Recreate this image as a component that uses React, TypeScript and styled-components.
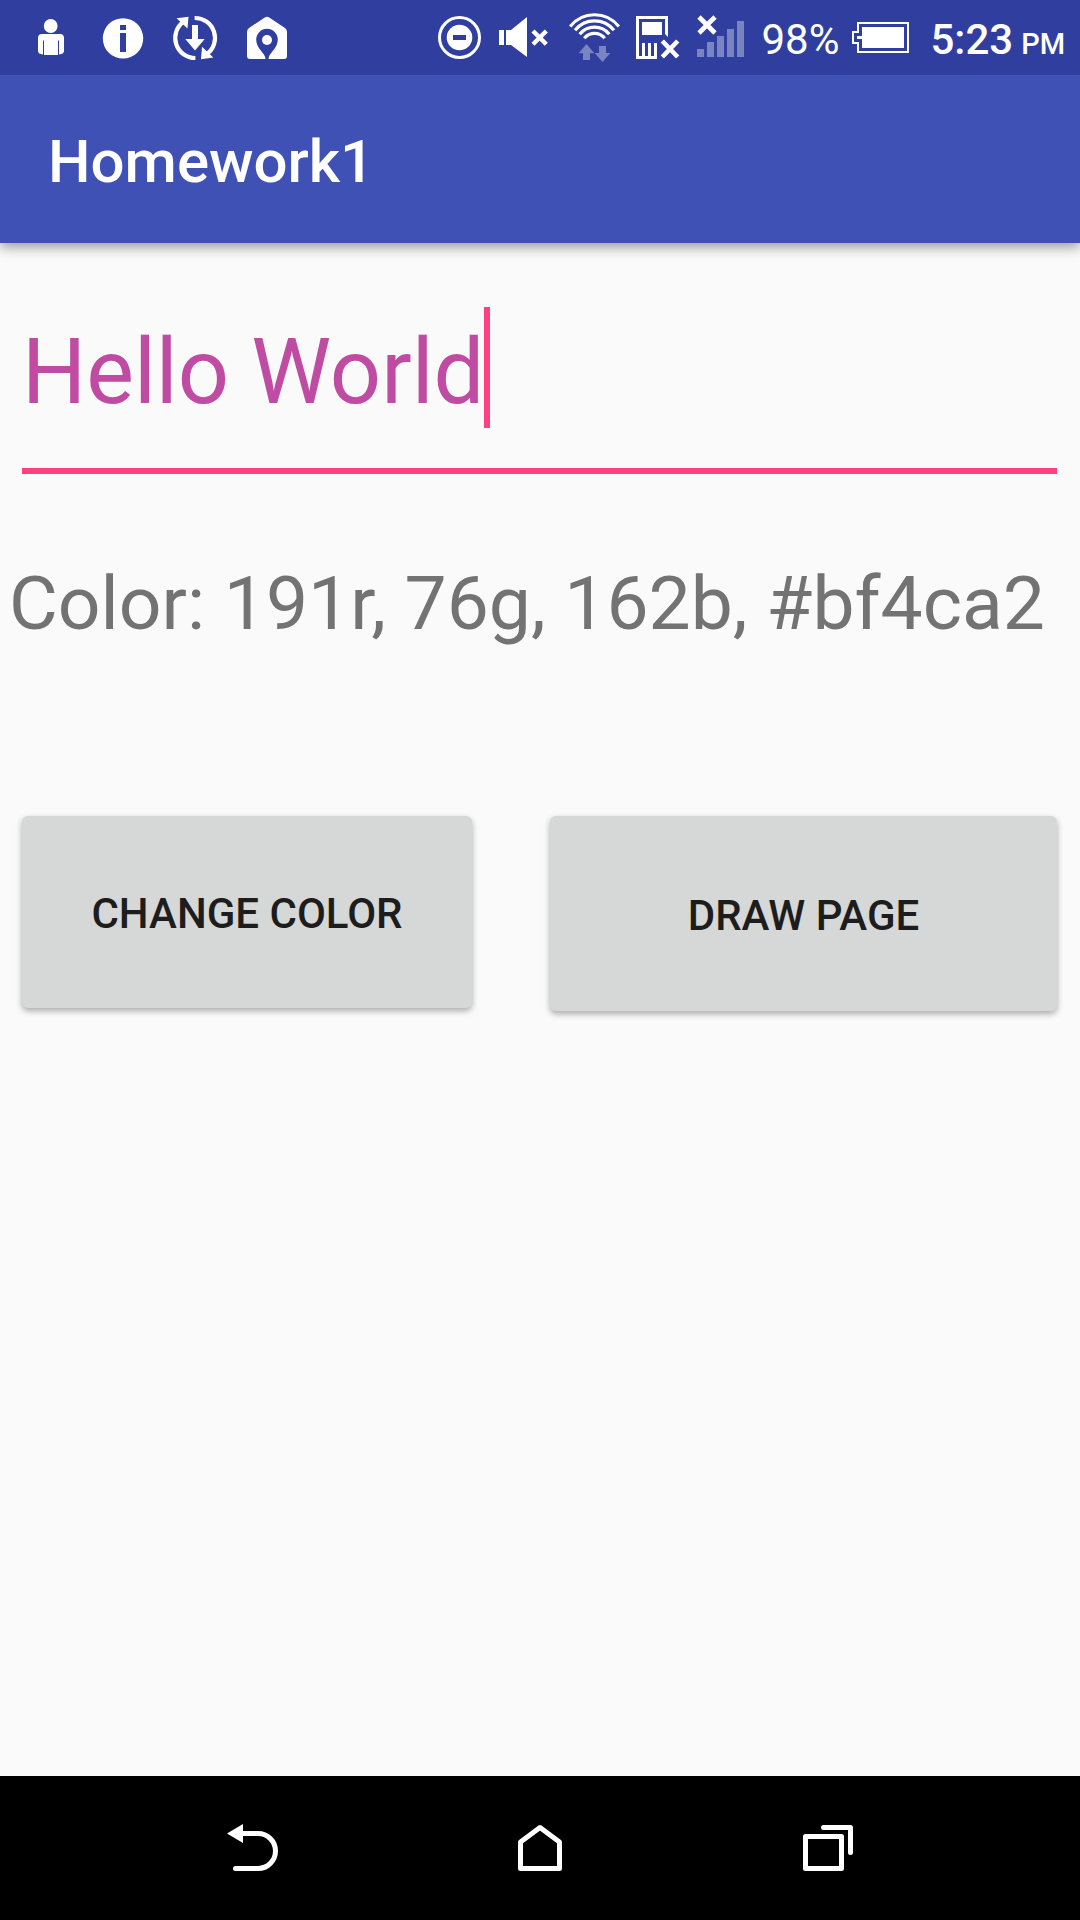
import React, { useState } from "react";
import styled, { createGlobalStyle } from "styled-components";

const GlobalStyle = createGlobalStyle`
  * {
    box-sizing: border-box;
  }
  body {
    margin: 0;
    background: #fafafa;
    font-family: Roboto, "Noto Sans", sans-serif;
  }
`;

const Screen = styled.div`
  display: flex;
  flex-direction: column;
  min-height: 100vh;
`;

const StatusBar = styled.div`
  position: relative;
  z-index: 1;
  display: flex;
  justify-content: space-between;
  height: 75px;
  padding: 0 15px 0 14px;
  background: #303f9f;
  color: #fff;
`;

const StatusGroup = styled.div<{ $gap?: number }>`
  display: flex;
  align-items: center;
  gap: ${(p) => p.$gap ?? 0}px;
`;

const StatusIcon = styled.svg`
  display: block;
  flex: none;
  height: 75px;
  fill: #fff;
`;

const Percent = styled.span`
  padding: 4px 0 0 3px;
  font-size: 42px;
  line-height: 48px;
`;

const Clock = styled.time`
  display: flex;
  align-items: baseline;
  gap: 8px;
  padding: 4px 0 0 8px;
  font-size: 42px;
  font-weight: 500;
  line-height: 48px;
`;

const Meridiem = styled.span`
  font-size: 29px;
  line-height: 30px;
`;

const AppBar = styled.header`
  display: flex;
  align-items: center;
  height: 168px;
  padding: 6px 48px 0;
  background: #3f51b5;
  box-shadow: 0 4px 12px rgba(0, 0, 0, 0.4);
  color: #fff;
`;

const Title = styled.h1`
  margin: 0;
  font-size: 60px;
  font-weight: 500;
  line-height: 72px;
`;

const Content = styled.main`
  display: flex;
  flex: 1;
  flex-direction: column;
  padding-top: 64px;
`;

const Field = styled.label`
  display: flex;
  align-items: center;
  height: 167px;
  margin: 0 23px 0 22px;
  padding-bottom: 40px;
  border-bottom: 6px solid #ff4081;
`;

const TextInput = styled.input`
  field-sizing: content;
  min-width: 0;
  height: 120px;
  padding: 10px 0 0;
  border: 0;
  outline: 0;
  background: none;
  color: #bf4ca2;
  font: 400 90px/110px Roboto, "Noto Sans", sans-serif;
`;

const Cursor = styled.span`
  flex: none;
  width: 6px;
  height: 121px;
  background: #ff4081;
`;

const ColorText = styled.p`
  margin: 85px 9px 0;
  color: #737373;
  font-size: 75px;
  line-height: 88px;
`;

const Actions = styled.div`
  display: grid;
  grid-template-columns: 450fr 507fr;
  align-items: start;
  gap: 78px;
  margin-top: 169px;
  padding: 0 23px 0 22px;
`;

const ActionButton = styled.button<{ $height: number }>`
  min-height: ${(p) => p.$height}px;
  padding: 4px 0 0;
  border: 0;
  border-radius: 6px;
  background: #d6d7d7;
  box-shadow: 0 3px 6px rgba(0, 0, 0, 0.32);
  color: #1d1d1d;
  font: 500 42px/48px Roboto, "Noto Sans", sans-serif;
  text-transform: uppercase;
`;

const NavBar = styled.nav`
  display: flex;
  height: 144px;
  padding: 0 10%;
  background: #000;
`;

const NavButton = styled.button`
  display: flex;
  flex: 1;
  align-items: center;
  justify-content: center;
  padding: 0;
  border: 0;
  background: none;
`;

const NavIcon = styled.svg`
  width: 60px;
  height: 60px;
  fill: none;
  stroke: #fff;
  stroke-width: 5;
  stroke-linecap: round;
  stroke-linejoin: round;
`;

type GlyphProps = { x: number; width: number; children: React.ReactNode };

/* Status glyphs share one horizontal strip; x is where a glyph's slot starts on it. */
const Glyph = ({ x, width, children }: GlyphProps) => (
  <StatusIcon width={width} viewBox={`${x} 0 ${width} 75`} aria-hidden="true">
    {children}
  </StatusIcon>
);

const faded = "#7a84c1";

const Notifications = () => (
  <StatusGroup>
    <Glyph x={14} width={73}>
      <circle cx="50.7" cy="26" r="6.9" />
      <path d="M42 34H60Q64 34 64 38V51Q64 54 59 54.5V40.5H58V55H44V40.5H43V54.5Q38 54 38 51V38Q38 34 42 34Z" />
    </Glyph>
    <Glyph x={87} width={72}>
      <path
        fillRule="evenodd"
        d="M123 18.2A20.2 20.2 0 1 1 123 58.6A20.2 20.2 0 1 1 123 18.2ZM120 25V30H126V25ZM120 33V52H126V33Z"
      />
    </Glyph>
    <Glyph x={159} width={72}>
      <path
        d="M194.6 18A20 20 0 0 1 207 54M195.4 58A20 20 0 0 1 183.5 21.8"
        fill="none"
        stroke="#fff"
        strokeWidth="4.2"
      />
      <path d="M176.5 18.3L188.5 16.8L187.5 28.5ZM202 46.7L201 59.3L213.3 57.5ZM192 25H198V39H204.7L195 50.5L185.3 39H192Z" />
    </Glyph>
    <Glyph x={231} width={72}>
      <path d="M264.8 17.5Q267 16 269.2 17.5L285 28Q287 29.5 287 32V56Q287 59 284 59H268.5C268.5 53 277.8 49 277.8 39.5A10.8 10.8 0 0 0 256.2 39.5C256.2 49 265.5 53 265.5 59H250Q247 59 247 56V32Q247 29.5 249 28Z" />
      <circle cx="267" cy="40" r="5" />
    </Glyph>
  </StatusGroup>
);

const SystemStatus = () => (
  <StatusGroup $gap={12}>
    <Glyph x={438} width={46}>
      <circle cx="459.5" cy="37.5" r="20" fill="none" stroke="#fff" strokeWidth="3" />
      <path
        fillRule="evenodd"
        d="M459.5 24.7A12.8 12.8 0 1 1 459.5 50.3A12.8 12.8 0 1 1 459.5 24.7ZM453 35V40H466V35Z"
      />
    </Glyph>
    <Glyph x={496} width={56}>
      <path d="M499 30H504V45H499ZM506 30H511L527 17V57L511 45H506Z" />
      <path d="M533 31L546.3 44.3M546.3 31L533 44.3" stroke="#fff" strokeWidth="4.4" />
    </Glyph>
    <Glyph x={564} width={58}>
      <path
        d="M570.2 26.5A31 31 0 0 1 618.8 26.5M575 30.3A25 25 0 0 1 614 30.3M579.7 34.3A19 19 0 0 1 609.3 34.3M584.3 38.3A13 13 0 0 1 604.7 38.3"
        fill="none"
        stroke="#fff"
        strokeWidth="3.2"
      />
      <path
        fill={faded}
        d="M586.5 44L594.3 53.3H590V60H583V53.3H578.7ZM599 46H606V53H610.3L602.5 62L594.7 53H599Z"
      />
    </Glyph>
    <Glyph x={634} width={50}>
      <path d="M636 16H668V37L665 34V19H639V56H642V43H645V56H648V43H651V56H654V43H657V59H636Z" />
      <rect x="642" y="22" width="20" height="13" />
      <path d="M662.3 41L677.7 57M677.7 41L662.3 57" stroke="#fff" strokeWidth="4.6" />
    </Glyph>
    <Glyph x={696} width={50}>
      <path
        fill={faded}
        d="M697 49H704V57H697ZM707 42H714V57H707ZM717 36H724V57H717ZM727 29H734V57H727ZM737 21H744V57H737Z"
      />
      <path d="M699 17L715 33M715 17L699 33" stroke="#fff" strokeWidth="4.6" />
    </Glyph>
    <Percent>98%</Percent>
    <Glyph x={851} width={59}>
      <path d="M858 23H908V52H858V43H853V32H858Z" fill="none" stroke="#fff" strokeWidth="2" />
      <path d="M862 27H904V48H862V39H857V36H862Z" />
    </Glyph>
    <Clock dateTime="17:23">
      5:23<Meridiem>PM</Meridiem>
    </Clock>
  </StatusGroup>
);

export default function App() {
  const [text, setText] = useState("Hello World");

  return (
    <>
      <GlobalStyle />
      <Screen>
        <StatusBar>
          <Notifications />
          <SystemStatus />
        </StatusBar>
        <AppBar>
          <Title>Homework1</Title>
        </AppBar>
        <Content>
          <Field>
            <TextInput
              type="text"
              aria-label="Text"
              value={text}
              onChange={(e) => setText(e.target.value)}
            />
            <Cursor />
          </Field>
          <ColorText>Color: 191r, 76g, 162b, #bf4ca2</ColorText>
          <Actions>
            <ActionButton type="button" $height={192}>
              Change color
            </ActionButton>
            <ActionButton type="button" $height={195}>
              Draw page
            </ActionButton>
          </Actions>
        </Content>
        <NavBar>
          <NavButton type="button" aria-label="Back">
            <NavIcon viewBox="222 1818 60 60">
              <path d="M240 1833.5H258A17.5 17.5 0 0 1 258 1868.5H235.5" />
              <path d="M227 1833.5L243 1824V1843Z" fill="#fff" stroke="none" />
            </NavIcon>
          </NavButton>
          <NavButton type="button" aria-label="Home">
            <NavIcon viewBox="510 1818 60 60">
              <path d="M540 1827.5L559.5 1842V1868.5H520.5V1842Z" />
            </NavIcon>
          </NavButton>
          <NavButton type="button" aria-label="Recent apps">
            <NavIcon viewBox="798 1818 60 60">
              <path d="M805.5 1836.5H841.5V1868.5H805.5ZM823.5 1827.5H850.5V1852.5" />
            </NavIcon>
          </NavButton>
        </NavBar>
      </Screen>
    </>
  );
}
